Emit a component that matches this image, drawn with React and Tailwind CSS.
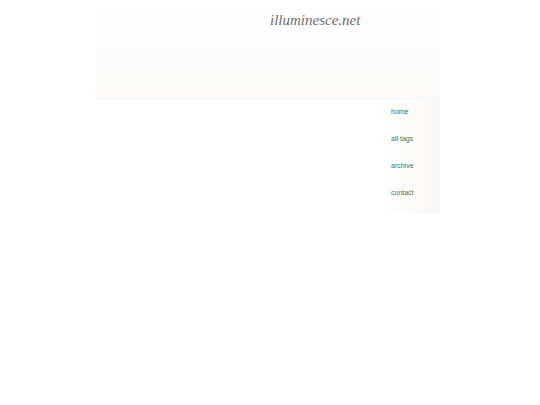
import React from "react";

const links = ["home", "all tags", "archive", "contact"];

export default function App() {
  return (
    <div className="min-h-screen bg-white font-['Liberation_Sans',Arial,sans-serif]">
      <div className="mx-auto w-[348px] pr-[4px]">
        {/* Header */}
        <div className="h-[99px] bg-gradient-to-b from-white via-[#fdfdfd] to-[#faf9f7] border-b border-dotted border-[#efece8] pt-[11px] pl-[174px]">
          <h1 className="font-['Liberation_Serif',Georgia,serif] italic text-[15px] leading-[18px] text-[#6b6b6b]">
            illuminesce.net
          </h1>
        </div>

        {/* Body */}
        <div className="flex">
          <div className="flex-1"></div>
          <div className="w-[56px] h-[114px] bg-gradient-to-r from-white via-[#fcfbfa] to-[#f9f7f5] pl-[7px] pt-[8px]">
            <ul className="flex flex-col gap-[17px]">
              {links.map((l) => (
                <li key={l} className="text-[7px] leading-[10px] text-[#2f7b5c]">
                  {l}
                </li>
              ))}
            </ul>
          </div>
        </div>
      </div>
    </div>
  );
}
